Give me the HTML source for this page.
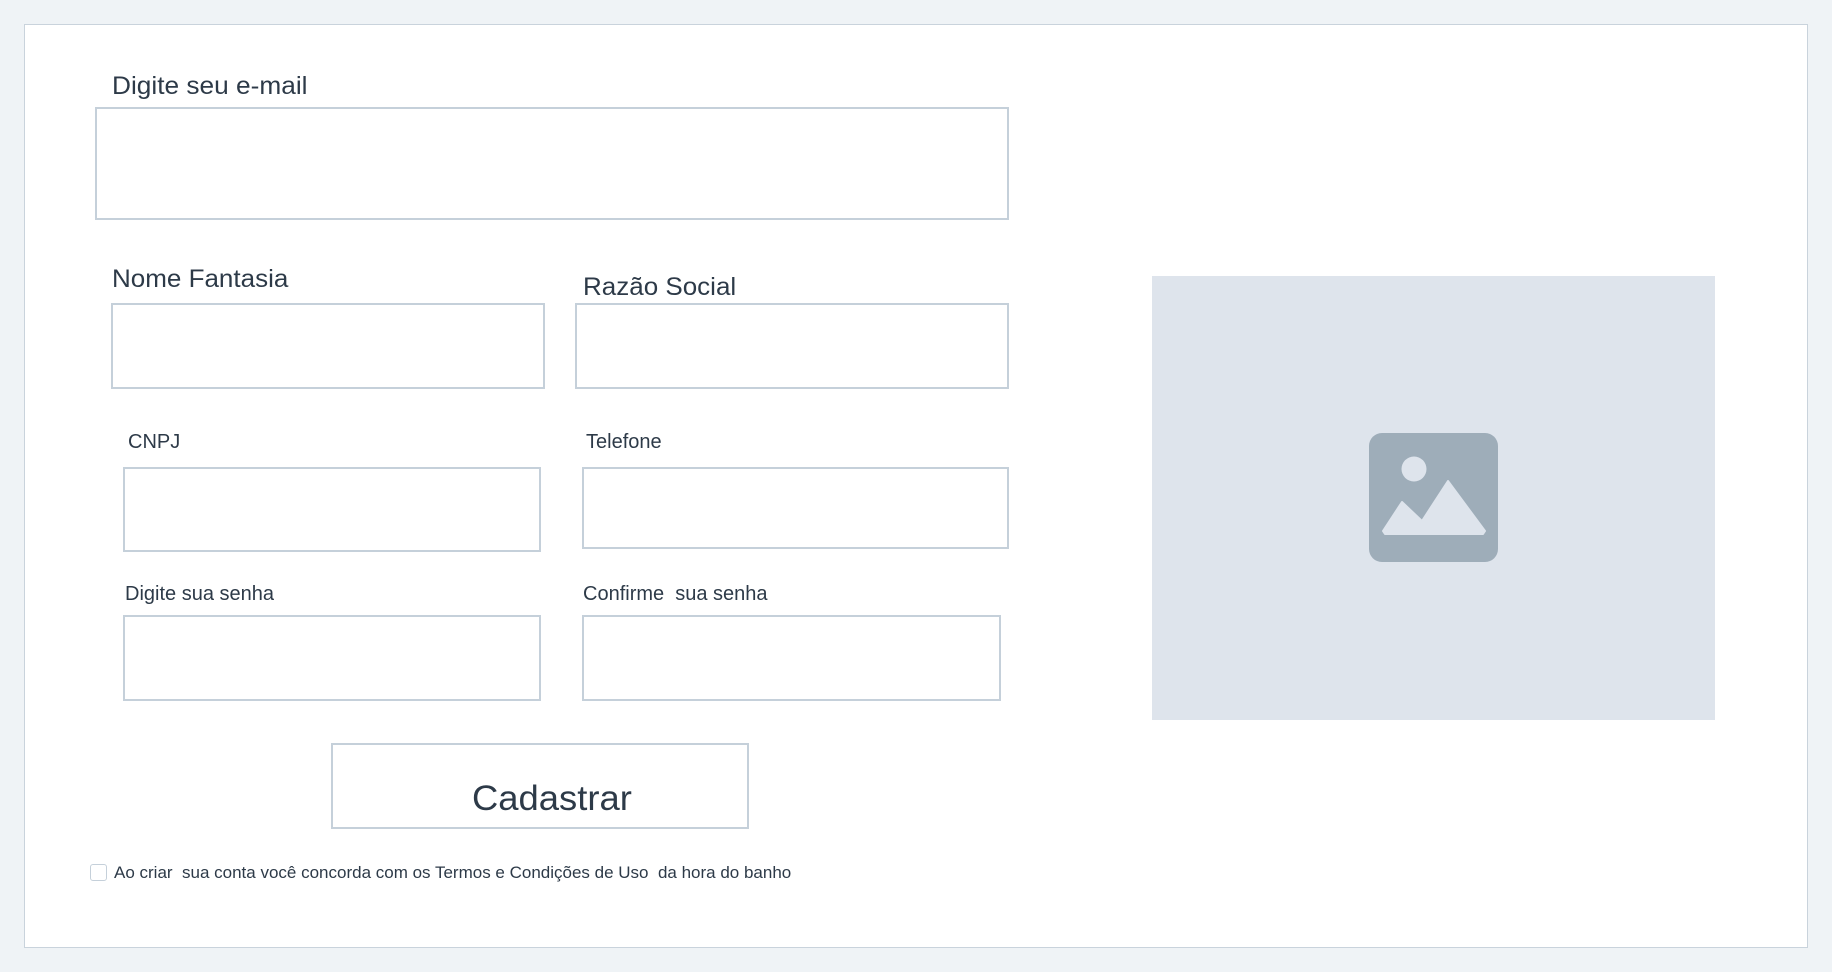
<!DOCTYPE html>
<html><head><meta charset="utf-8"><style>
body{margin:0;width:1832px;height:972px;background:#eff3f6;position:relative;overflow:hidden;font-family:"Liberation Sans",sans-serif;color:#2d3a48}
.p{position:absolute;left:24px;top:24px;width:1782px;height:922px;background:#fff;border:1px solid #c9d3dc}
.b{position:absolute;border:2px solid #c5d0da;box-sizing:border-box;background:#fff}
.t{position:absolute;white-space:nowrap;transform-origin:left top;transform:scaleX(1.0)}
</style></head><body>
<div class="p"></div>
<div class="t" style="left:112px;top:72px;font-size:25px;transform:scaleX(1.05)">Digite seu e-mail</div>
<div class="b" style="left:95px;top:107px;width:914px;height:113px"></div>
<div class="t" style="left:112px;top:265px;font-size:25px;transform:scaleX(1.04)">Nome Fantasia</div>
<div class="b" style="left:111px;top:303px;width:434px;height:86px"></div>
<div class="t" style="left:583px;top:273px;font-size:25px;transform:scaleX(1.04)">Razão Social</div>
<div class="b" style="left:575px;top:303px;width:434px;height:86px"></div>
<div class="t" style="left:128px;top:431px;font-size:20px">CNPJ</div>
<div class="b" style="left:123px;top:467px;width:418px;height:85px"></div>
<div class="t" style="left:586px;top:431px;font-size:20px">Telefone</div>
<div class="b" style="left:582px;top:467px;width:427px;height:82px"></div>
<div class="t" style="left:125px;top:583px;font-size:20px">Digite sua senha</div>
<div class="b" style="left:123px;top:615px;width:418px;height:86px"></div>
<div class="t" style="left:583px;top:583px;font-size:20px">Confirme&nbsp; sua senha</div>
<div class="b" style="left:582px;top:615px;width:419px;height:86px"></div>
<div class="b" style="left:331px;top:743px;width:418px;height:86px"></div>
<div class="t" style="left:472px;top:779px;font-size:35px;transform:scaleX(1.04)">Cadastrar</div>
<div class="b" style="left:90px;top:864px;width:17px;height:17px;border-radius:3px;border-width:1.5px"></div>
<div class="t" style="left:114px;top:863px;font-size:17px">Ao criar&nbsp; sua conta você concorda com os Termos e Condições de Uso&nbsp; da hora do banho</div>
<div style="position:absolute;left:1152px;top:276px;width:563px;height:444px;background:#dee4ec"></div>
<svg style="position:absolute;left:0;top:0" width="1832" height="972">
<rect x="1369" y="433" width="129" height="129" rx="13" fill="#9eadb9"/>
<circle cx="1414" cy="469" r="12.5" fill="#dee4ec"/>
<path d="M1385 534 L1383 531 L1402 502 L1422 521 L1448 481 L1485 531 L1483 534 Z" fill="#dee4ec" stroke="#dee4ec" stroke-width="2" stroke-linejoin="round"/>
</svg>
</body></html>
